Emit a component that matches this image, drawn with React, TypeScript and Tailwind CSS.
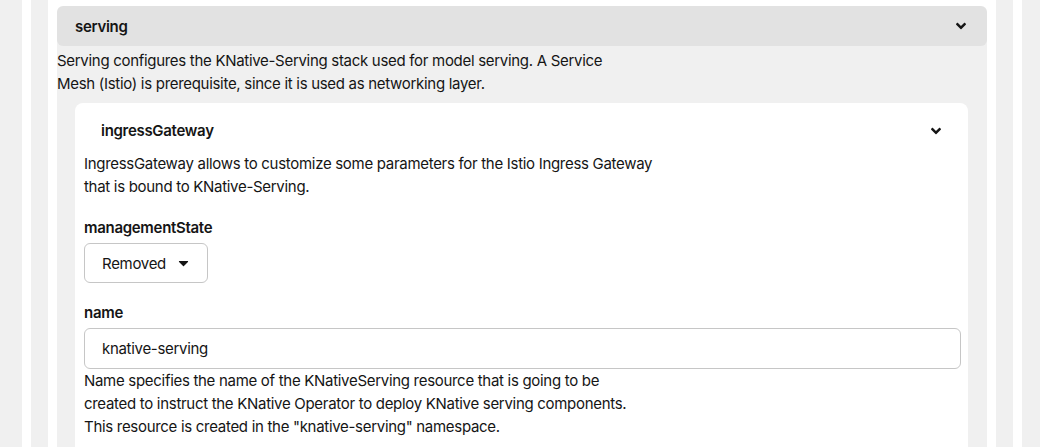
import React from "react";

function AngleDown() {
  return (
    <svg viewBox="0 0 320 512" className="h-4 w-[10px] fill-[#151515]" aria-hidden>
      <path d="M143 352.3L7 216.3c-9.4-9.4-9.4-24.6 0-33.9l22.6-22.6c9.4-9.4 24.6-9.4 33.9 0l96.4 96.4 96.4-96.4c9.4-9.4 24.6-9.4 33.9 0l22.6 22.6c9.4 9.4 9.4 24.6 0 33.9l-136 136c-9.2 9.4-24.4 9.4-33.8 0z" />
    </svg>
  );
}

function CaretDown() {
  return (
    <svg viewBox="0 0 320 512" className="h-4 w-[11px] fill-[#151515]" aria-hidden>
      <path d="M31.3 192h257.3c17.8 0 26.7 21.5 14.1 34.1L174.1 354.8c-7.8 7.8-20.5 7.8-28.3 0L17.2 226.1C4.6 213.5 13.5 192 31.3 192z" />
    </svg>
  );
}

export default function App() {
  return (
    <div
      className="h-screen overflow-hidden bg-white pr-[5px] text-[15px] leading-[23px] tracking-[-0.3px] text-[#151515]"
      style={{ fontFamily: "Inter, 'Noto Sans', sans-serif" }}
    >
      <div className="bg-[#f0f0f0] pl-[22px] pr-[18px]">
        <div className="bg-white px-[9px]">
          <div className="bg-[#f0f0f0] px-[17px]">
            <div className="bg-white px-[9px] pt-[6px]">
              {/* serving */}
              <div className="bg-[linear-gradient(to_bottom,transparent_50%,#f0f0f0_50%)]">
                <button className="flex h-10 w-full items-center justify-between rounded-md bg-[#e2e2e2] pl-[18px] pr-[21px] text-left">
                  <span className="font-semibold">serving</span>
                  <AngleDown />
                </button>
              </div>
              <div className="bg-[#f0f0f0] pb-[2px] pr-[19px]">
                <p className="pt-[3px]">
                  Serving configures the KNative-Serving stack used for model serving. A Service
                  <br />
                  Mesh (Istio) is prerequisite, since it is used as networking layer.
                </p>

                <div className="ml-[18px] mt-[8px] rounded-t-lg bg-white pb-6 pl-[9px] pr-[7px]">
                  <button className="-mr-[7px] -ml-[9px] flex w-[calc(100%+16px)] items-center justify-between pb-[10px] pl-[26px] pr-[27px] pt-[16px] text-left">
                    <span className="font-semibold">ingressGateway</span>
                    <AngleDown />
                  </button>
                  <p>
                    IngressGateway allows to customize some parameters for the Istio Ingress Gateway
                    <br />
                    that is bound to KNative-Serving.
                  </p>

                  <div className="mt-[18px]">
                    <label className="mb-1 block font-semibold">managementState</label>
                    <button className="flex h-10 w-[124px] items-center gap-3 rounded-md border border-[#c6c6c6] bg-white pl-[17px] text-left">
                      <span>Removed</span>
                      <CaretDown />
                    </button>
                  </div>

                  <div className="mt-[18px]">
                    <label className="mb-1 block font-semibold">name</label>
                    <input
                      readOnly
                      value="knative-serving"
                      className="h-[41px] w-full rounded-md border border-[#c6c6c6] bg-white px-[17px] text-[15px] tracking-[-0.3px] text-[#151515] outline-none"
                      style={{ fontFamily: "inherit" }}
                    />
                    <p>
                      Name specifies the name of the KNativeServing resource that is going to be
                      <br />
                      created to instruct the KNative Operator to deploy KNative serving components.
                      <br />
                      This resource is created in the "knative-serving" namespace.
                    </p>
                  </div>
                </div>
              </div>
            </div>
          </div>
        </div>
      </div>
    </div>
  );
}
